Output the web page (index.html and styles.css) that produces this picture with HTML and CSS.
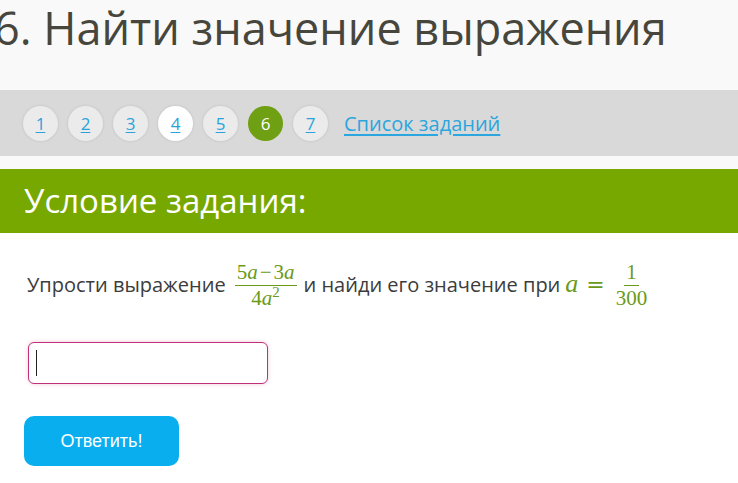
FILE: index.html
```html
<!DOCTYPE html>
<html lang="ru">
<head>
<meta charset="utf-8">
<title>Найти значение выражения</title>
<link rel="stylesheet" href="styles.css">
</head>
<body>
<header class="top">
  <h1 class="title">6. Найти значение выражения</h1>
</header>
<nav class="pager">
  <a class="dot" href="#">1</a>
  <a class="dot" href="#">2</a>
  <a class="dot" href="#">3</a>
  <a class="dot dot-white" href="#">4</a>
  <a class="dot" href="#">5</a>
  <span class="dot dot-active">6</span>
  <a class="dot" href="#">7</a>
  <a class="list-link" href="#">Список заданий</a>
</nav>
<div class="spacer"></div>
<section class="cond">
  <h2 class="cond-title">Условие задания:</h2>
</section>
<main class="content">
  <p class="task"><span>Упрости выражение</span><span class="frac frac-a"><span class="num">5<i>a</i><span class="minus">−</span>3<i>a</i></span><span class="den">4<i>a</i><sup>2</sup></span></span><span>и найди его значение при</span><span class="math"><i class="va">a</i><span class="eq">=</span><span class="frac frac-b"><span class="num">1</span><span class="den">300</span></span></span></p>
  <div class="answer"><span class="caret"></span></div>
  <button class="submit">Ответить!</button>
</main>
</body>
</html>
```
FILE: styles.css
```css
html, body {
  margin: 0;
  padding: 0;
  background: #ffffff;
  font-family: "Open Sans", "Noto Sans", sans-serif;
  overflow: hidden;
}
.top {
  background: #f9f9f9;
  height: 90px;
  overflow: hidden;
}
.title {
  margin: 0 0 0 -6px;
  padding-top: 2px;
  font-weight: 400;
  font-size: 45px;
  line-height: 52px;
  color: #47463c;
  white-space: nowrap;
}
.pager {
  background: #d9d9d9;
  height: 66px;
  display: flex;
  align-items: center;
  gap: 10px;
  padding-left: 23px;
  box-sizing: border-box;
}
.dot {
  width: 35px;
  height: 35px;
  border-radius: 50%;
  background: #ebebeb;
  box-shadow: 0 0 3px rgba(0, 0, 0, 0.12);
  display: flex;
  align-items: center;
  justify-content: center;
  color: #2aa3dc;
  font-size: 17px;
  text-decoration: underline;
  text-underline-offset: 2px;
}
.dot-white { background: #ffffff; }
.dot-active {
  background: #6f9f12;
  color: #ffffff;
  text-decoration: none;
  box-shadow: none;
}
.list-link {
  margin-left: 6px;
  color: #2ba6de;
  font-size: 20px;
  text-decoration: underline;
  text-underline-offset: 3px;
}
.spacer {
  height: 13px;
  background: #f9f9f9;
}
.cond {
  background: #77a800;
  height: 64px;
  display: flex;
  align-items: center;
  padding-left: 24px;
}
.cond-title {
  margin: 0;
  font-weight: 400;
  font-size: 33px;
  color: #ffffff;
  line-height: 40px;
}
.content {
  padding: 23px 0 0 24px;
}
.task {
  margin: 0 0 0 3px;
  font-size: 20px;
  color: #3c3c3c;
  display: flex;
  align-items: center;
  height: 56px;
  white-space: nowrap;
}
.frac {
  display: inline-flex;
  flex-direction: column;
  align-items: center;
  font-family: "Liberation Serif", "DejaVu Serif", serif;
  color: #6a9a1a;
}
.frac-a { margin: 2px 7px 0 9px; font-size: 21px; }
.frac-b { margin: 2px 0 0 11px; font-size: 21px; }
.frac i, .math i { font-style: italic; }
.minus { margin: 0 2px; }
.frac .num {
  padding: 0 2px 3px;
  border-bottom: 1px solid #6a9a1a;
  line-height: 19px;
}
.frac .den {
  padding-top: 3px;
  line-height: 19px;
}
.frac sup { font-size: 15px; vertical-align: 8px; line-height: 0; }
.math {
  display: inline-flex;
  align-items: center;
  margin-left: 5px;
  font-family: "Liberation Serif", "DejaVu Serif", serif;
  color: #6a9a1a;
}
.va { font-size: 26px; }
.eq {
  font-family: "DejaVu Serif", serif;
  font-size: 22px;
  margin-left: 8px;
}
.answer {
  margin: 30px 0 0 4px;
  width: 240px;
  height: 42px;
  box-sizing: border-box;
  border: 1px solid #c0307c;
  border-radius: 6px;
  background: #ffffff;
  box-shadow: 0 0 4px rgba(192, 48, 124, 0.25);
  display: flex;
  align-items: center;
  padding-left: 7px;
}
.caret {
  width: 1px;
  height: 26px;
  background: #222;
}
.submit {
  margin-top: 32px;
  width: 155px;
  height: 50px;
  border: none;
  border-radius: 10px;
  background: #08aeee;
  color: #ffffff;
  font-family: "Liberation Sans", Arial, sans-serif;
  font-size: 18px;
  cursor: pointer;
}
```
